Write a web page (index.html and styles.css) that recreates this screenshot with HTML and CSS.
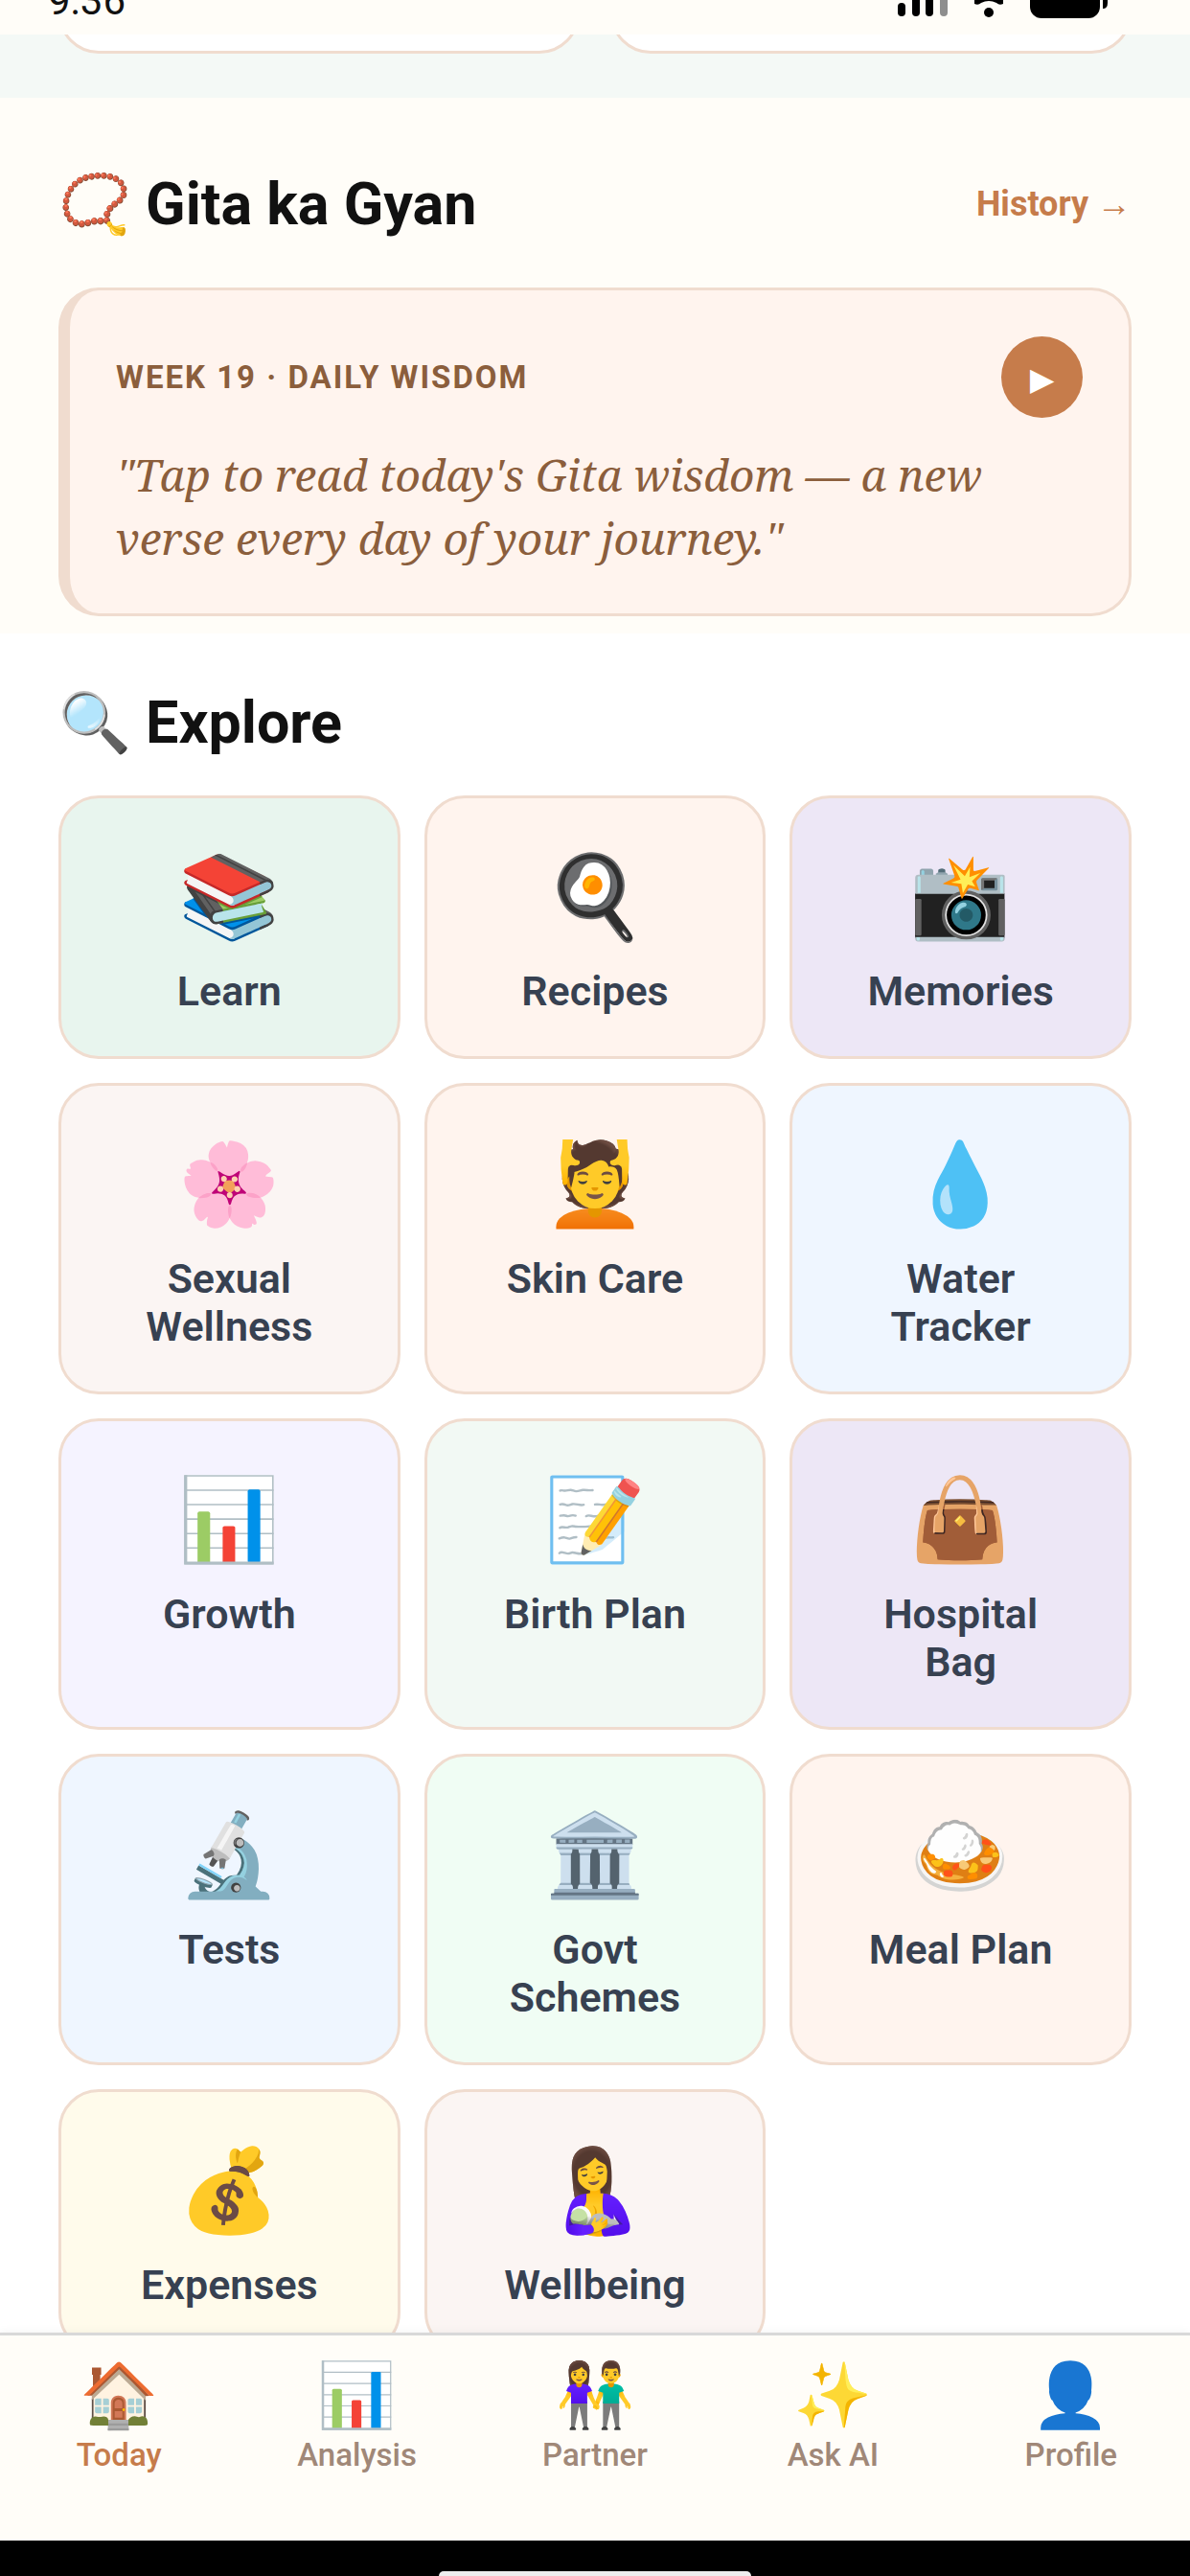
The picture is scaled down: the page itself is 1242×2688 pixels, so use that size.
FILE: index.html
```
<!DOCTYPE html>
<html lang="en">
<head>
    <meta charset="UTF-8">
    <meta name="viewport" content="width=device-width, initial-scale=1.0">
    <title>Today</title>
    <link rel="stylesheet" href="styles.css">
</head>
<body>
    <header class="status-bar">
        <span class="time">9:36</span>
        <svg class="status-icons" width="222" height="40" viewBox="0 0 222 40" aria-hidden="true">
            <rect x="0" y="24" width="8" height="14" rx="4"/>
            <rect x="15" y="16" width="8" height="22" rx="4"/>
            <rect x="29" y="8" width="8" height="30" rx="4"/>
            <rect x="44" y="0" width="8" height="38" rx="4" fill="#8e8e8e"/>
            <path d="M80 20q15 -13 30 0v5q-4 2 -7 -1q-8 -4 -16 0q-3 3 -7 1z"/>
            <circle cx="95" cy="34" r="5"/>
            <rect x="138" y="0" width="73" height="40" rx="12"/>
            <path d="M214 10h5v14q0 6 -5 6z"/>
        </svg>
    </header>

    <main class="content">
        <div class="strip">
            <div class="strip-card"></div>
            <div class="strip-card"></div>
        </div>

        <section class="gita">
            <div class="section-head">
                <h2>📿 Gita ka Gyan</h2>
                <a class="history" href="#">History →</a>
            </div>
            <div class="wisdom">
                <div class="wisdom-head">
                    <span class="week">WEEK 19 · DAILY WISDOM</span>
                    <button class="play" aria-label="Play">▶</button>
                </div>
                <p class="quote">"Tap to read today's Gita wisdom — a new verse every day of your journey."</p>
            </div>
        </section>

        <section class="explore">
            <h2>🔍 Explore</h2>
            <div class="grid">
                <a class="tile mint" href="#"><span class="icon">📚</span><span class="label">Learn</span></a>
                <a class="tile peach" href="#"><span class="icon">🍳</span><span class="label">Recipes</span></a>
                <a class="tile lilac" href="#"><span class="icon">📸</span><span class="label">Memories</span></a>
                <a class="tile rose" href="#"><span class="icon">🌸</span><span class="label">Sexual Wellness</span></a>
                <a class="tile peach" href="#"><span class="icon">💆</span><span class="label">Skin Care</span></a>
                <a class="tile blue" href="#"><span class="icon">💧</span><span class="label">Water Tracker</span></a>
                <a class="tile violet" href="#"><span class="icon">📊</span><span class="label">Growth</span></a>
                <a class="tile sage" href="#"><span class="icon">📝</span><span class="label">Birth Plan</span></a>
                <a class="tile lilac" href="#"><span class="icon">👜</span><span class="label">Hospital Bag</span></a>
                <a class="tile blue" href="#"><span class="icon">🔬</span><span class="label">Tests</span></a>
                <a class="tile green" href="#"><span class="icon">🏛️</span><span class="label">Govt Schemes</span></a>
                <a class="tile peach" href="#"><span class="icon">🍛</span><span class="label">Meal Plan</span></a>
                <a class="tile yellow" href="#"><span class="icon">💰</span><span class="label">Expenses</span></a>
                <a class="tile rose" href="#"><span class="icon">🤱</span><span class="label">Wellbeing</span></a>
            </div>
        </section>
    </main>

    <nav class="tabs">
        <a class="tab active" href="#"><span class="tab-icon">🏠</span>Today</a>
        <a class="tab" href="#"><span class="tab-icon">📊</span>Analysis</a>
        <a class="tab" href="#"><span class="tab-icon">👫</span>Partner</a>
        <a class="tab" href="#"><span class="tab-icon">✨</span>Ask AI</a>
        <a class="tab" href="#"><span class="tab-icon">👤</span>Profile</a>
    </nav>
    <div class="home-bar"><div class="home-handle"></div></div>
</body>
</html>
```
FILE: styles.css
```
* {
    box-sizing: border-box;
}
body {
    margin: 0;
    height: 100vh;
    display: flex;
    flex-direction: column;
    overflow: hidden;
    font-family: Roboto, "Noto Color Emoji", sans-serif;
    background-color: #fffdf8;
}
a {
    text-decoration: none;
}
h2 {
    margin: 0;
    font-size: 61px;
    line-height: 72px;
    font-weight: bold;
    color: #111;
}
.status-bar {
    display: flex;
    flex: none;
    justify-content: space-between;
    align-items: flex-end;
    height: 36px;
    padding: 0 83px 17px 50px;
}
.time {
    font-size: 42px;
    line-height: 36px;
    color: #111;
}
.content {
    flex: 1;
    min-height: 0;
    overflow: hidden;
    background-color: white;
}
.strip {
    display: flex;
    gap: 32px;
    padding: 0 61px 46px;
    overflow: hidden;
    background-color: #f4f9f6;
}
/* only the bottom of these cards shows under the status bar */
.strip-card {
    flex: 1;
    height: 120px;
    margin-top: -100px;
    border: 3px solid #f0dccf;
    border-radius: 42px;
    background-color: white;
}
.gita {
    padding: 75px 61px 18px;
    background-color: #fffdf8;
}
.section-head {
    display: flex;
    justify-content: space-between;
    align-items: center;
    margin-bottom: 51px;
}
.history {
    font-size: 36px;
    font-weight: bold;
    color: #c67c4b;
}
.wisdom {
    padding: 48px 48px 46px;
    border: 3px solid #f0dccf;
    border-left-width: 12px;
    border-radius: 42px;
    background-color: #fff4ee;
}
.wisdom-head {
    display: flex;
    justify-content: space-between;
    align-items: center;
}
.week {
    font-size: 33px;
    font-weight: bold;
    letter-spacing: 2px;
    color: #8b5e3c;
}
.play {
    width: 85px;
    height: 85px;
    padding: 4px 0 0;
    border: none;
    border-radius: 50%;
    background-color: #c67c4b;
    color: white;
    font-size: 33px;
}
.quote {
    margin: 26px 0 0;
    font-family: "Noto Serif", "Liberation Serif", serif;
    font-style: italic;
    font-size: 46px;
    line-height: 66px;
    color: #8b5e3c;
}
.explore {
    padding: 57px 61px;
}
.grid {
    display: grid;
    grid-template-columns: repeat(3, 1fr);
    gap: 25px;
    margin-top: 40px;
}
.tile {
    display: flex;
    flex-direction: column;
    align-items: center;
    gap: 23px;
    padding: 53px 66px 43px;
    border: 3px solid #f0dccf;
    border-radius: 42px;
}
.icon {
    font-size: 85px;
    line-height: 100px;
}
.label {
    font-size: 43px;
    line-height: 50px;
    font-weight: 600;
    text-align: center;
    color: #374151;
}
.mint {
    background-color: #e8f5ee;
}
.peach {
    background-color: #fff4ee;
}
.lilac {
    background-color: #ede7f6;
}
.rose {
    background-color: #fbf5f3;
}
.blue {
    background-color: #eff6ff;
}
.violet {
    background-color: #f5f3ff;
}
.sage {
    background-color: #f2f9f4;
}
.green {
    background-color: #f0fdf4;
}
.yellow {
    background-color: #fffbeb;
}
.tabs {
    position: relative;
    display: flex;
    flex: none;
    height: 217px;
    padding-top: 22px;
    border-top: 3px solid #d8d8d8;
    background-color: #fffdf8;
    box-shadow: 0 0 10px rgba(0, 0, 0, 0.06);
}
.tab {
    flex: 1;
    display: flex;
    flex-direction: column;
    align-items: center;
    font-size: 33px;
    line-height: 42px;
    font-weight: 500;
    color: #a08878;
}
.tab-icon {
    font-size: 66px;
    line-height: 82px;
}
.active {
    color: #c67c4b;
}
.home-bar {
    display: flex;
    flex: none;
    justify-content: center;
    align-items: flex-end;
    height: 37px;
    background-color: black;
}
.home-handle {
    width: 326px;
    height: 5px;
    border-radius: 5px 5px 0 0;
    background-color: #eee;
}
```
